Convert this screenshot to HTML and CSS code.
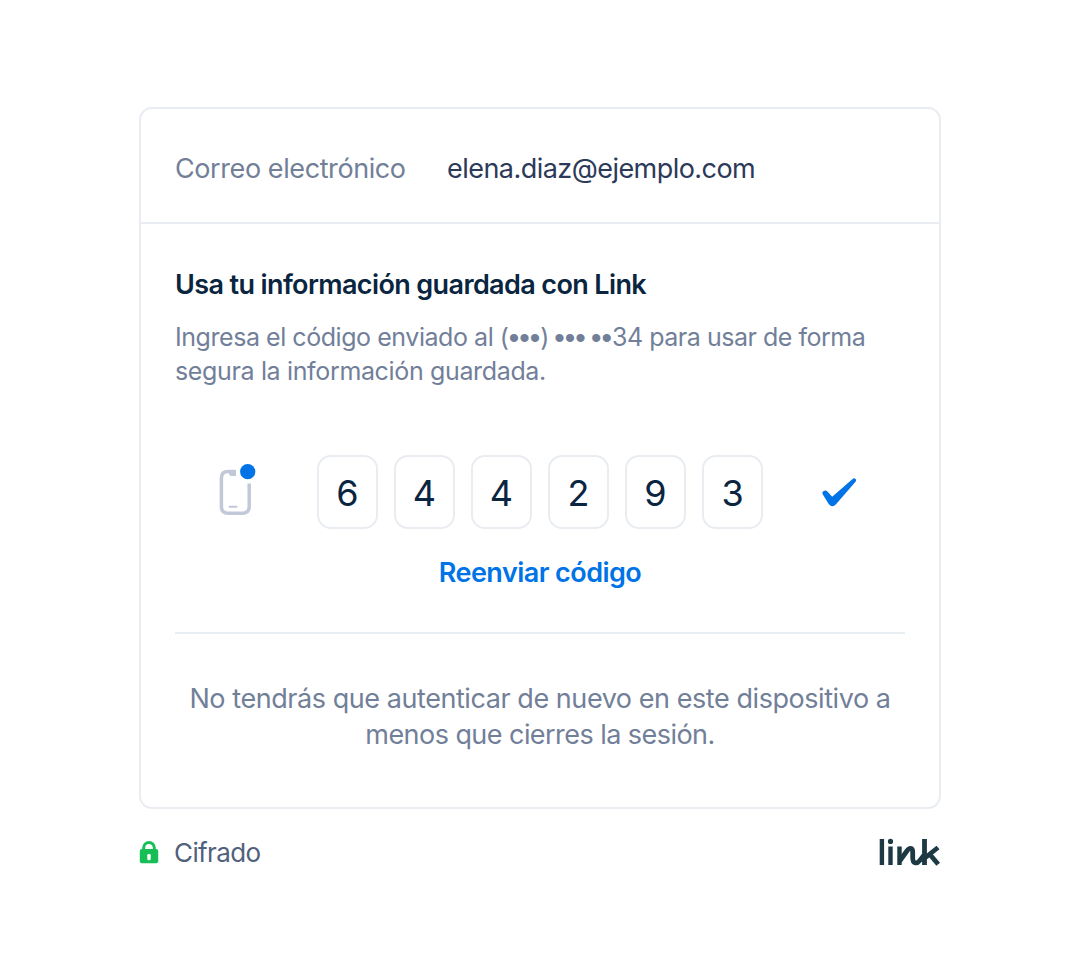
FILE: index.html
```
<!DOCTYPE html>
<html lang="es">
<head>
<meta charset="utf-8">
<title>Link</title>
<link rel="stylesheet" href="styles.css">
</head>
<body>
<main class="page">
  <section class="card">
    <div class="email-row">
      <span class="email-label">Correo electrónico</span>
      <span class="email-value">elena.diaz@ejemplo.com</span>
    </div>
    <div class="content">
      <h1 class="title">Usa tu información guardada con Link</h1>
      <p class="hint"><span class="lead">Ingresa el código enviado al </span><span class="number">(<span class="mask">•••</span>) <span class="mask">•••</span> <span class="mask">••</span></span><span class="tail">34 para usar de forma</span><br>segura la información guardada.</p>
      <div class="code-row">
        <svg class="phone" width="40" height="54" viewBox="216 465 40 54" fill="none">
          <path d="M235 471.400H228Q221.400 471.400 221.400 478V506.500Q221.400 513.200 228 513.200H242.500Q249.200 513.200 249.200 506.500V483.500" stroke="#c1c9d8" stroke-width="3.500"/>
          <path d="M229 470H236V476H231.500Q229 476 229 473Z" fill="#c1c9d8"/>
          <path d="M229.500 506.800H236.500" stroke="#c1c9d8" stroke-width="2" stroke-linecap="round"/>
          <circle cx="247.700" cy="471.700" r="7.600" fill="#0073e6"/>
        </svg>
        <div class="digits">
          <span class="digit">6</span><span class="digit">4</span><span class="digit">4</span><span class="digit">2</span><span class="digit">9</span><span class="digit">3</span>
        </div>
        <svg class="check" width="36" height="32" viewBox="821 476 36 32">
          <path d="M823 494.800Q821.600 492.500 823.400 491.200Q825.600 489.700 827.400 491.600L832.200 496.700L852.600 479Q854.300 477.700 855.500 479Q856.600 480.200 855.500 481.700L836 504.200Q832.200 508.200 828.700 503.900Z" fill="#0073e6"/>
        </svg>
      </div>
      <a class="resend">Reenviar código</a>
      <p class="note">No tendrás que autenticar de nuevo en este dispositivo a<br><span class="note-end">menos que cierres la sesión.</span></p>
    </div>
  </section>
  <footer class="footer">
    <div class="secure">
      <svg width="20" height="24" viewBox="139 840 20 24">
        <path d="M143.700 851V847.800A5.300 5.300 0 0 1 154.300 847.800V851" fill="none" stroke="#16bf55" stroke-width="3"/>
        <rect x="139.800" y="849" width="18.400" height="14.300" rx="2" fill="#16bf55"/>
        <rect x="147.300" y="854" width="3.400" height="6.200" rx="1.200" fill="#fff"/>
      </svg>
      <span class="secure-text">Cifrado</span>
    </div>
    <svg class="logo" width="62" height="28" viewBox="879 838 62 28" fill="none" stroke="#1d3944" stroke-width="4.400" role="img" aria-label="link">
      <path d="M881.900 839V865M890.500 846.500V865M899.500 846.500V865"/>
      <circle cx="890.500" cy="841.400" r="2.600" fill="#1d3944" stroke="none"/>
      <path d="M899.700 861L906.500 851.500C909.500 847.200 912.700 847.500 912.700 852V857.500C912.700 863.700 916.500 864.600 920 860.200L924.500 854.500M924.500 839V865M925.500 857.500L938 847.500M929.500 854L938.200 864.200" stroke-width="4.800"/>
    </svg>
  </footer>
</main>
</body>
</html>
```
FILE: styles.css
```
* { box-sizing: border-box; }
body {
  margin: 0;
  background: #fff;
  font-family: Inter, "Liberation Sans", sans-serif;
  font-size: 27px;
  line-height: 36px;
  white-space: nowrap;
}
h1, p { margin: 0; }
svg { display: block; }
.page { width: 802px; margin: 0 auto; padding-top: 107px; }
.card {
  height: 702px;
  border: 2px solid #e9edf2;
  border-radius: 13px;
}
.email-row {
  display: flex;
  height: 115px;
  padding: 42px 34px 0;
  border-bottom: 2px solid #e9edf2;
}
.email-label { width: 272px; color: #727f99; letter-spacing: -.41px; }
.email-value { color: #2c3a59; letter-spacing: -.54px; }
.content { padding: 43px 34px 0; }
.title {
  font-size: 27px;
  font-weight: 600;
  letter-spacing: -.62px;
  color: #0a2540;
}
.hint {
  margin-top: 17px;
  font-size: 25px;
  line-height: 34px;
  letter-spacing: -.35px;
  color: #727f99;
}
.lead { letter-spacing: -.45px; }
.number { word-spacing: -1.4px; }
.mask {
  font-family: "Liberation Sans", sans-serif;
  font-size: 30px;
  line-height: 20px;
  letter-spacing: 0;
  vertical-align: -2px;
}
.tail { letter-spacing: -.48px; }
.code-row {
  display: flex;
  align-items: center;
  height: 74px;
  margin-top: 67px;
  padding-left: 41px;
}
.phone { overflow: visible; }
.digits { display: flex; gap: 16px; margin-left: 61px; }
.digit {
  width: 61px;
  height: 74px;
  border: 2px solid #e9edf2;
  border-radius: 14px;
  padding-top: 1px;
  font-size: 36px;
  line-height: 70px;
  text-align: center;
  color: #0a2540;
}
.check { margin-left: 58px; }
.resend {
  display: block;
  margin-top: 26px;
  padding-bottom: 41px;
  border-bottom: 2px solid #e9eef3;
  font-weight: 600;
  letter-spacing: -.55px;
  text-align: center;
  color: #0073e6;
}
.note {
  margin-top: 47px;
  letter-spacing: -.44px;
  text-align: center;
  color: #727f99;
}
.note-end { letter-spacing: -.55px; }
.footer {
  display: flex;
  justify-content: space-between;
  margin-top: 29px;
}
.secure { display: flex; gap: 15px; padding-top: 2px; }
.secure-text {
  font-size: 26px;
  line-height: 26px;
  letter-spacing: -.6px;
  color: #50607d;
}
```
